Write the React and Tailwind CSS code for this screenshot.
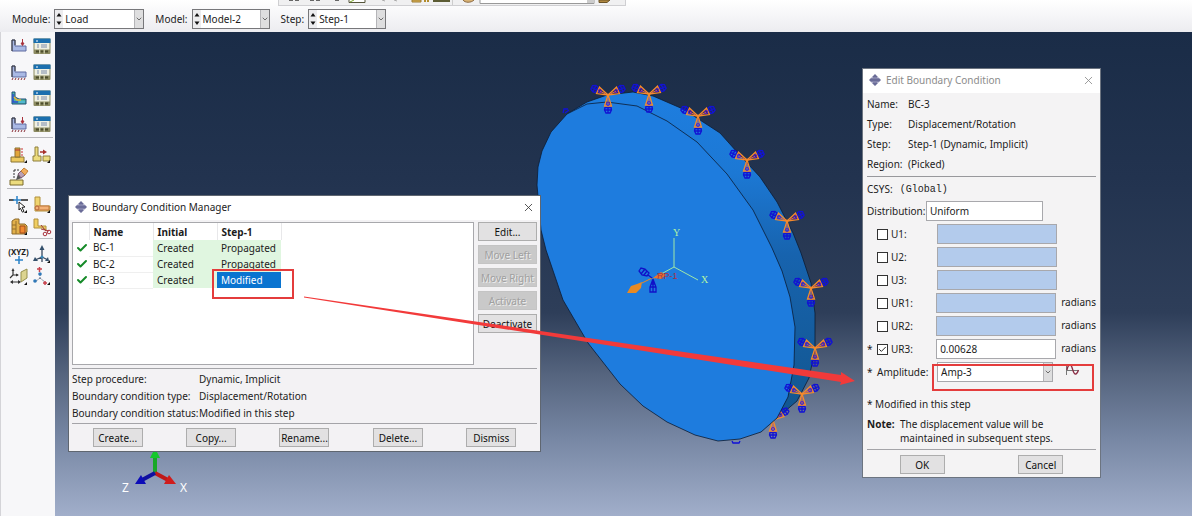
import React, { useState } from "react";
import { X, ChevronDown, Check } from "lucide-react";

/* ---------- toolbox icons ---------- */

const BracketIcon = ({ kind }) => (
  <svg width="18" height="18" viewBox="0 0 18 18" fill="none">
    {kind === "field" ? (
      <>
        <path d="M2 3h3v5l4 2h7v5H2z" fill="#4fb6a4" stroke="#1f4f78" />
        <path d="M3 5v8h5" stroke="#2c4fd0" strokeWidth="1.5" />
        <path d="M4 8l3 3h4" stroke="#e6b23a" strokeWidth="1.5" />
        <path d="M9 13h6" stroke="#52b8e0" strokeWidth="1.5" />
      </>
    ) : (
      <path d="M2 3h3v6h11v5H2z" fill="#a9b9e4" stroke="#5f6ba0" />
    )}
    {kind !== "field" && <path d="M2 3v11M2 3h3v5" stroke="#3a3a3a" />}
    {(kind === "load" || kind === "case") && (
      <path d="M12.5 2v6M11 6l1.5 2.500L14 6z" stroke="#a8323c" fill="#a8323c" />
    )}
    {(kind === "bc" || kind === "case") && (
      <path d="M3 15l-1 2M6 15l-1 2M9 15l-1 2M12 15l-1 2M15 15l-1 2" stroke="#8a3038" />
    )}
  </svg>
);

const ManagerIcon = () => (
  <svg width="18" height="18" viewBox="0 0 18 18">
    <rect x=".5" y="1.5" width="17" height="15.500" rx="1" fill="#8b8a60" />
    <rect x=".5" y="1.5" width="17" height="4.500" fill="#1b6fae" />
    <path d="M3 4h2" stroke="#fff" />
    <rect x="1.5" y="6" width="15" height="6.500" fill="#eff0e2" />
    <path d="M4 8h2M4 10h2M8 8h6M8 10h6" stroke="#7c8cab" />
    <path d="M3 14.500h3M7.500 14.500h3M12 14.500h3" stroke="#4c4d2c" strokeWidth="2" />
    <path d="M6.700 12.500v4M11.200 12.500v4" stroke="#d8d8b8" />
  </svg>
);

const Corner = () => <path d="M18 15v3h-3z" fill="#111" />;

const ToolIcon = ({ name }) => (
  <svg width="20" height="20" viewBox="0 0 20 20" fill="none">
    {name === "partition-cell" && (
      <>
        <path d="M2 12h13v5H2z" fill="#ecc95e" stroke="#8a7434" />
        <path d="M6 3h5v9H6z" fill="#e2a53a" stroke="#8a7030" />
        <path d="M6 5h5" stroke="#a8323c" />
        <path d="M13 3v9" stroke="#c33" strokeDasharray="2 1" />
        <Corner />
      </>
    )}
    {name === "translate" && (
      <>
        <path d="M3 2h3v9h3v5H1v-5h2z" fill="#ecdc7e" stroke="#8e7e3c" />
        <path d="M11 11h7v5h-7z" fill="#ecdc7e" stroke="#8e7e3c" />
        <path d="M8 7h4" stroke="#a8322c" strokeWidth="1.5" />
        <path d="M11 4.500L15 7l-4 2.500z" fill="#a8322c" />
        <Corner />
      </>
    )}
    {name === "edit" && (
      <>
        <path d="M1 13h13v5H1z" fill="#ecdc7e" stroke="#7a6a2c" />
        <path d="M5 3v9M5 3h5" stroke="#333" strokeDasharray="2 1" />
        <path d="M7 13l2-6 4 4z" fill="#555" />
        <path d="M9 7l3-3 4 4-4 3z" fill="#b9a0b4" stroke="#7a5a70" />
        <path d="M12 4l3-3 4 3-3 4z" fill="#f0ad5c" stroke="#c08038" />
      </>
    )}
    {name === "pick" && (
      <>
        <path d="M0 5h5M12 5h7" stroke="#222" strokeWidth="1.5" />
        <path d="M8 1v8M4 5h8" stroke="#2a82c8" strokeWidth="1.5" />
        <path d="M10 7l6 5-3 .4 2 4-1.600.8-2-4L10 15z" fill="#fff" stroke="#222" />
        <Corner />
      </>
    )}
    {name === "face" && (
      <>
        <path d="M3 2h5v9h10v5H3z" fill="#f0d470" stroke="#b0903c" />
        <path d="M4 11h13v4H4z" fill="#f3b277" stroke="#c0753a" />
        <circle cx="5" cy="13" r="2" fill="#f3b277" stroke="#b5653a" />
        <Corner />
      </>
    )}
    {name === "solid" && (
      <>
        <path d="M3 4l3-2h4v5h6l2 2v6l-3 2H3z" fill="#e2b04a" stroke="#8c6a2c" />
        <path d="M7 4v13M3 8h4M3 12h4" stroke="#94702c" />
        <path d="M11 9h5v7h-5z" fill="#f08830" stroke="#a04a1c" />
        <Corner />
      </>
    )}
    {name === "cut" && (
      <>
        <path d="M2 2h4v7h8v5l-3-3H2z" fill="#f0cf62" stroke="#b0903c" />
        <path d="M9 8l5 6M9 12l8 2" stroke="#a03c3c" />
        <circle cx="13" cy="17" r="1.800" stroke="#a8323c" />
        <circle cx="17" cy="15" r="1.800" stroke="#a8323c" />
      </>
    )}
    {name === "triad" && (
      <>
        <path d="M10 3v9L3 15M10 12l6 3M10 12v5" stroke="#39495f" strokeWidth="1.300" />
        <path d="M10 0l2.500 5h-5zM1 16l2-4 3 4zM17 16l-1-4-3 4z" fill="#34506c" />
        <circle cx="10" cy="12" r="1.500" fill="#3886b8" />
        <Corner />
      </>
    )}
    {name === "plane" && (
      <>
        <path d="M12 5l6-3v9l-6 4z" fill="#dcd490" stroke="#96904c" />
        <path d="M4 3v5l-3 3M4 8h5M2 15h9" stroke="#333" strokeWidth="1.200" />
        <path d="M4 1l1.500 3h-3zM10 8L7 6.500v3zM1 15l3-2v4zM12 15l-3-2v4z" fill="#333" />
        <Corner />
      </>
    )}
    {name === "points" && (
      <>
        <path d="M5 2h5M7.500 0v5" stroke="#c8414c" strokeWidth="1.500" />
        <path d="M8 7v4M8 11l-5 4M8 11l6 5" stroke="#6a7a90" strokeDasharray="2 1" />
        <circle cx="8" cy="7" r="1.800" fill="#2f78b8" />
        <circle cx="3" cy="14" r="1.800" fill="#2f78b8" />
        <path d="M11 16h4M13 14v4" stroke="#c8414c" strokeWidth="1.500" />
        <Corner />
      </>
    )}
  </svg>
);

const AppLogo = () => (
  <svg width="12" height="12" viewBox="0 0 12 12" className="shrink-0">
    <path d="M6 0l3.500 3.500h-7zM6 12l3.500-3.500h-7zM0 6l2-2h8l2 2-2 2H2z" fill="#6a6c98" />
    <path d="M4 2h4v8H4z" fill="#6a6c98" />
    <path d="M2 4h8M2 8h8" stroke="#a9aac8" strokeWidth=".8" />
  </svg>
);

/* ---------- top bar ---------- */

const ToolbarRemnant = () => (
  <div className="ml-[278px] flex h-[6px] w-[348px] items-start overflow-hidden border-r border-b border-l border-[#cfcfd2] bg-[#f0f0f1]">
    <svg width="346" height="5" viewBox="0 0 346 5" fill="none">
      <path d="M10 .5h4M16 .5h4M31 .5h4M37 .5h4M56 .5h4" stroke="#666" />
      <path d="M70 0v2.500h16V0" stroke="#55553a" fill="#fff" />
      <path d="M71 2l4-2" stroke="#7ca52c" />
      <path d="M103 0l3 1M115 0l3 1" stroke="#aaa" />
      <path d="M133 0h9v2h-9z" fill="#e2b654" stroke="#9a7a34" />
      <path d="M146 0v2M149 0v2" stroke="#b28c2c" strokeWidth="2" />
      <path d="M154 0h17v2h-17z" fill="#5c5c34" />
      <path d="M173.500 0v5" stroke="#ccc" />
      <path d="M184 0c2 3 8 3 11 0" fill="#d8b274" stroke="#8a6840" />
      <path d="M201 0v3.500h114V0" fill="#fff" stroke="#999" />
      <path d="M308 0h7v3h-7z" fill="#ccc" />
      <path d="M320 0h11l-3 2.500h-8z" fill="#b08840" stroke="#6c5428" />
    </svg>
  </div>
);

const ContextSelect = ({ id, label, value, width }) => (
  <div className="flex items-center gap-1">
    <label htmlFor={id}>{label}:</label>
    <div className={`flex h-5 items-stretch border border-[#77777a] bg-white ${width}`}>
      <div className="flex w-2 shrink-0 flex-col justify-evenly bg-[#ececee]">
        <svg width="8" height="6" viewBox="0 0 8 6"><path d="M4 1l2.500 3.500h-5z" fill="#111" /></svg>
        <svg width="8" height="6" viewBox="0 0 8 6"><path d="M4 5l2.500-3.500h-5z" fill="#111" /></svg>
      </div>
      <select id={id} defaultValue={value} className="min-w-0 flex-1 appearance-none bg-transparent pl-0.5 outline-none">
        <option>{value}</option>
      </select>
      <span className="pointer-events-none flex w-[9px] shrink-0 items-center border-l border-[#b5b5b8] bg-[#dededf]">
        <ChevronDown size={8} strokeWidth={2.5} color="#555" />
      </span>
    </div>
  </div>
);

/* ---------- side toolbox ---------- */

const ToolRow = ({ children, tall }) => (
  <div className={`grid grid-cols-2 place-items-center ${tall ? "h-[26px]" : "h-[22px]"}`}>{children}</div>
);

const Tool = ({ label, children }) => (
  <button aria-label={label} className="flex items-center justify-center">{children}</button>
);

const Toolbox = () => (
  <aside className="w-[55px] shrink-0 border-l border-[#d4d4d8] bg-[#f7f7f9] pr-0.5 pl-1.5">
    <div className="border-b border-[#b9b9bd] pt-px">
      {["load", "bc", "field", "case"].map((k) => (
        <ToolRow key={k} tall>
          <Tool label={`create ${k}`}><BracketIcon kind={k} /></Tool>
          <Tool label={`${k} manager`}><ManagerIcon /></Tool>
        </ToolRow>
      ))}
    </div>
    <div className="border-b border-[#b9b9bd] pt-[6px]">
      <ToolRow>
        <Tool label="partition cell"><ToolIcon name="partition-cell" /></Tool>
        <Tool label="translate"><ToolIcon name="translate" /></Tool>
      </ToolRow>
      <ToolRow>
        <Tool label="edit"><ToolIcon name="edit" /></Tool>
      </ToolRow>
    </div>
    <div className="border-b border-[#b9b9bd] pt-[5px]">
      <ToolRow>
        <Tool label="pick edge"><ToolIcon name="pick" /></Tool>
        <Tool label="partition face"><ToolIcon name="face" /></Tool>
      </ToolRow>
      <ToolRow>
        <Tool label="partition solid"><ToolIcon name="solid" /></Tool>
        <Tool label="cut"><ToolIcon name="cut" /></Tool>
      </ToolRow>
    </div>
    <div className="pt-[5px]">
      <ToolRow>
        <Tool label="datum point">
          <span className="flex flex-col items-center text-[8px] leading-[9px] font-bold">
            (XYZ)
            <svg width="8" height="8" viewBox="0 0 8 8"><path d="M4 0v8M0 4h8" stroke="#2a82c8" strokeWidth="1.5" /></svg>
          </span>
        </Tool>
        <Tool label="datum csys"><ToolIcon name="triad" /></Tool>
      </ToolRow>
      <ToolRow>
        <Tool label="datum plane"><ToolIcon name="plane" /></Tool>
        <Tool label="csys by points"><ToolIcon name="points" /></Tool>
      </ToolRow>
    </div>
  </aside>
);

/* ---------- 3D viewport ---------- */

const Arm = ({ angle }) => (
  <g transform={`rotate(${angle})`} fill="none">
    <path d="M0 12v6M-3 12.500h6l.5 2.500-1.500 3h-4l-1.500-3zM-3 15h6" stroke="#1212d4" strokeWidth="1.300" />
    <path d="M0 0L-3.500 11h7z" stroke="#f58a2c" strokeWidth="1.300" />
    <path d="M0 3v6" stroke="#e06a4c" />
    <circle cx="0" cy="9" r="1.500" stroke="#5a1cc8" />
  </g>
);

const BcMarker = ({ x, y }) => (
  <g transform={`translate(${x} ${y})`}>
    <Arm angle={0} />
    <Arm angle={115} />
    <Arm angle={245} />
  </g>
);

const markers = [
  [608, 95], [649, 94], [698, 116], [747, 160], [787, 221], [811, 288], [815, 348], [802, 394],
];

const front =
  "537,185 538,167 542,151 551,132 567,114 587,104 607,102 637,106 667,121 697,142 727,174 753,210 772,248 782,271 790,297 795,327 794,365 788,397 777,418 761,432 740,439 718,441 695,435 667,422 643,406 620,384 588,343 563,300 546,250 541,230";
const rim =
  "567,114 587,102 607,95 633,92 653,96 683,109 720,133 737,152 760,177 777,202 793,233 801,253 811,283 815,313 815,350 809,378 797,401 777,418 740,400 600,140";

const Scene = () => (
  <svg width="1137" height="484" viewBox="55 32 1137 484" className="absolute top-0 left-0">
    <defs>
      <linearGradient id="rim" x1="0" y1="0" x2="0" y2="1">
        <stop offset="0" stopColor="#1e7ee0" />
        <stop offset=".25" stopColor="#1c78d4" />
        <stop offset=".5" stopColor="#1763ae" />
        <stop offset="1" stopColor="#12568f" />
      </linearGradient>
    </defs>
    <g fill="none" stroke="#1010d8" strokeWidth="1.300">
      <path d="M563 113l1-4 4 0M565 113l4-3M732 441l1 2h6l1-2" />
    </g>
    <polygon points={rim} fill="url(#rim)" stroke="#0b1c33" strokeWidth=".8" />
    <g transform="translate(773 420)">
      <Arm angle={0} />
      <Arm angle={235} />
    </g>
    <polygon points={front} fill="#1e7cde" stroke="#0b1c33" strokeWidth=".8" />
    {markers.map(([x, y]) => (
      <BcMarker key={`${x}-${y}`} x={x} y={y} />
    ))}

    {/* view triad at the part origin */}
    <path d="M674 238v29l24 13M674 267l-22 12" fill="none" stroke="#9fe8a8" />
    <g fill="#b4f5a4" fontFamily="Liberation Serif, serif" fontSize="10">
      <text x="673" y="236">Y</text>
      <text x="701" y="283">X</text>
    </g>

    {/* reference point */}
    <path d="M653 278l8-6 5 3-5 4z" fill="#e8762c" />
    <path d="M627 293l4-7 6-2 5-2-1 6-5 5z" fill="#e88a24" />
    <path d="M642 283l10-5" stroke="#e88a24" />
    <g fill="none" stroke="#1010c8" strokeWidth="1.300">
      <path d="M639 271l2-3 4 1 4 4-2 3-5-1zM641 274l4-5M644 275l3-4M648 275l4 3" />
      <path d="M653 279l-3 8v5h6v-5zM650 287h6M653 280v12M651 284h4" />
    </g>
    <text x="657" y="279" fontSize="9" fill="#a83048" fontFamily="Liberation Sans, sans-serif">RP-1</text>

    {/* global triad */}
    <g strokeWidth="4">
      <path d="M155 473v-18" stroke="#18a828" />
      <path d="M155 473l13 7" stroke="#c01818" />
      <path d="M155 473l-13 7" stroke="#1010a0" />
    </g>
    <path d="M150 458l5-10 5 10z" fill="#14c82c" />
    <path d="M169 475l7 9-12 0z" fill="#d01c1c" />
    <path d="M141 475l-6 9 11 0z" fill="#0c0cb8" />
    <g fill="#fff" fontSize="12" fontFamily="Noto Sans, sans-serif">
      <text x="122" y="492">Z</text>
      <text x="180" y="492">X</text>
    </g>
  </svg>
);

const Annotations = () => (
  <svg width="1137" height="484" viewBox="55 32 1137 484" className="pointer-events-none absolute top-0 left-0">
    <rect x="213" y="270" width="80" height="28" fill="none" stroke="#e43c3c" strokeWidth="2" />
    <rect x="933" y="365" width="160" height="25" fill="none" stroke="#e43c3c" strokeWidth="2" />
    <path d="M304 296.500L841 375l0-3 14 9-15 4 1-3L304 297.500z" fill="#f23a3a" />
  </svg>
);

/* ---------- dialogs ---------- */

const TitleBar = ({ title, dim }) => (
  <div className="flex h-6 items-center gap-[5px] bg-white pr-[5px] pb-0.5 pl-1.5">
    <AppLogo />
    <h2 className={`flex-1 ${dim ? "text-[#8c8c8c]" : "text-[#222]"}`}>{title}</h2>
    <button aria-label="Close">
      <X size={13} strokeWidth={1.5} color={dim ? "#888" : "#333"} />
    </button>
  </div>
);

const PushButton = ({ children, disabled, className = "" }) => (
  <button
    disabled={disabled}
    className={`h-[19px] border leading-none whitespace-nowrap ${
      disabled
        ? "border-[#c4c4c4] bg-[#c9c9c9] text-[#a0a0a0] [text-shadow:1px_1px_0_#eee]"
        : "border-[#adadad] bg-[#e2e1e2] text-[#111]"
    } ${className}`}
  >
    {children}
  </button>
);

const conditions = [
  { name: "BC-1", initial: "Created", step: "Propagated" },
  { name: "BC-2", initial: "Created", step: "Propagated" },
  { name: "BC-3", initial: "Created", step: "Modified" },
];

const ManagerDialog = () => {
  const [selected, setSelected] = useState("BC-3");

  return (
    <section className="absolute top-[163px] left-[13px] w-[473px] border border-[#5f6670] bg-[#f3f2f4]">
      <TitleBar title="Boundary Condition Manager" />
      <div className="px-[3px] pt-0.5">
        <div className="flex gap-1 pb-[3px]">
          <div className="h-[143px] flex-1 border border-[#a8a8ac] bg-white">
            <table className="w-[208px] table-fixed border-collapse text-left">
              <colgroup>
                <col className="w-4" />
                <col className="w-16" />
                <col className="w-16" />
                <col className="w-16" />
              </colgroup>
              <thead>
                <tr className="h-[17px] leading-4 font-bold">
                  <td className="border-r border-[#e8e8ea]" />
                  <th className="border-r border-[#e8e8ea] p-0 pl-1">Name</th>
                  <th className="border-r border-[#e8e8ea] p-0 pl-1">Initial</th>
                  <th className="border-r border-[#e8e8ea] p-0 pl-1">Step-1</th>
                </tr>
              </thead>
              <tbody>
                {conditions.map((c) => (
                  <tr key={c.name} className="h-4 leading-[15px]" onClick={() => setSelected(c.name)}>
                    <td className="p-0 pl-[3px]">
                      <Check size={12} strokeWidth={4} color="#158a28" />
                    </td>
                    <td className="border-b border-[#efefef] p-0 pl-1">{c.name}</td>
                    <td className="bg-[#e0f6e0] p-0 pl-1">{c.initial}</td>
                    <td className={`p-0 pl-1 ${selected === c.name ? "bg-[#0a74d0] text-white" : "bg-[#e0f6e0]"}`}>
                      {c.step}
                    </td>
                  </tr>
                ))}
              </tbody>
            </table>
          </div>
          <div className="flex w-[59px] flex-col gap-1">
            <PushButton>Edit...</PushButton>
            <PushButton disabled>Move Left</PushButton>
            <PushButton disabled>Move Right</PushButton>
            <PushButton disabled>Activate</PushButton>
            <PushButton>Deactivate</PushButton>
          </div>
        </div>
        <dl className="grid grid-cols-[127px_1fr] border-y border-[#a4a4a8] pt-0.5 pb-px leading-[17px]">
          <dt>Step procedure:</dt>
          <dd>Dynamic, Implicit</dd>
          <dt>Boundary condition type:</dt>
          <dd>Displacement/Rotation</dd>
          <dt>Boundary condition status:</dt>
          <dd>Modified in this step</dd>
        </dl>
      </div>
      <div className="grid grid-cols-5 justify-items-center px-0.5 pt-1 pb-1">
        {["Create...", "Copy...", "Rename...", "Delete...", "Dismiss"].map((b) => (
          <PushButton key={b} className="w-[50px]">{b}</PushButton>
        ))}
      </div>
    </section>
  );
};

const dofs = [
  { name: "U1" },
  { name: "U2" },
  { name: "U3" },
  { name: "UR1", unit: "radians" },
  { name: "UR2", unit: "radians" },
  { name: "UR3", unit: "radians", value: "0.00628" },
];

const EditDialog = () => (
  <section className="absolute top-[36px] left-[807px] w-[239px] border border-[#6c7480] bg-[#f4f3f4]">
    <TitleBar title="Edit Boundary Condition" dim />
    <div className="px-1">
      <dl className="grid grid-cols-[41px_1fr] border-b border-[#98989c] pt-px pb-0.5 leading-[20px]">
        <dt>Name:</dt>
        <dd>BC-3</dd>
        <dt>Type:</dt>
        <dd>Displacement/Rotation</dd>
        <dt>Step:</dt>
        <dd>Step-1 (Dynamic, Implicit)</dd>
        <dt>Region:</dt>
        <dd>(Picked)</dd>
      </dl>
      <p className="flex h-6 items-center gap-[7px]">
        CSYS: <span className="font-['Liberation_Mono',monospace]">(Global)</span>
      </p>
      <div className="mb-[3px] flex items-center">
        <label htmlFor="distribution" className="w-[59px]">Distribution:</label>
        <input
          id="distribution"
          defaultValue="Uniform"
          className="h-5 w-[117px] border border-[#a8a8ac] bg-white px-[3px] outline-none"
        />
      </div>
      <div className="flex flex-col gap-[3px]">
        {dofs.map((d) => (
          <div key={d.name} className="flex h-5 items-center">
            <span className="w-[10px]">{d.value ? "*" : ""}</span>
            <label className="flex w-[60px] items-center gap-[3px]">
              <input
                type="checkbox"
                defaultChecked={!!d.value}
                className="peer h-[11px] w-[11px] appearance-none border border-[#333] bg-white"
              />
              <Check size={9} strokeWidth={2.5} className="-ml-[13px] hidden peer-checked:block" />
              <span className="peer-checked:ml-px">{d.name}:</span>
            </label>
            <input
              aria-label={`${d.name} value`}
              defaultValue={d.value}
              disabled={!d.value}
              className="h-5 w-[120px] border border-[#a8a8ac] bg-white px-[3px] outline-none disabled:bg-[#b3cbec]"
            />
            {d.unit && <span className="pb-0.5 pl-[5px]">{d.unit}</span>}
          </div>
        ))}
      </div>
      <div className="mt-[3px] flex h-5 items-center">
        <span className="w-[10px]">*</span>
        <label htmlFor="amplitude" className="w-[60px]">Amplitude:</label>
        <div className="flex h-5 w-[116px] items-stretch border border-[#a8a8ac] bg-white">
          <select id="amplitude" defaultValue="Amp-3" className="min-w-0 flex-1 appearance-none bg-transparent pl-[3px] outline-none">
            <option>Amp-3</option>
          </select>
          <span className="pointer-events-none flex w-[9px] items-center border-l border-[#b5b5b8] bg-[#dededf]">
            <ChevronDown size={8} strokeWidth={2.5} color="#555" />
          </span>
        </div>
        <button aria-label="Create amplitude" className="pb-1 pl-3">
          <svg width="15" height="14" viewBox="0 0 15 14" fill="none">
            <path d="M1.500 1v11M1.500 7.500h12" stroke="#777" />
            <path d="M2 7C3 1 6 0 7.500 6s4 7 6 1" stroke="#8a2c44" strokeWidth="1.300" />
          </svg>
        </button>
      </div>
      <p className="mt-3 h-5 leading-5">* Modified in this step</p>
      <div className="grid grid-cols-[33px_1fr] border-b border-[#a4a4a8] pt-[3px] pb-1 leading-[14px]">
        <b>Note:</b>
        <p>
          The displacement value will be
          <br />
          maintained in subsequent steps.
        </p>
      </div>
    </div>
    <div className="grid grid-cols-2 justify-items-center pt-[5px] pb-[3px]">
      <PushButton className="w-[45px]">OK</PushButton>
      <PushButton className="w-[45px]">Cancel</PushButton>
    </div>
  </section>
);

export default function App() {
  return (
    <div className="flex min-h-screen flex-col overflow-hidden bg-[#f7f7f9] font-['Noto_Sans','Noto_Sans_CJK_SC',sans-serif] text-[10px] text-[#1c1c1c]">
      <header className="h-8 bg-linear-to-b from-white to-[#ececf0]">
        <ToolbarRemnant />
        <div className="flex h-[26px] items-center gap-[11px] pl-3">
          <ContextSelect id="module" label="Module" value="Load" width="w-[90px]" />
          <ContextSelect id="model" label="Model" value="Model-2" width="w-[78px]" />
          <ContextSelect id="step" label="Step" value="Step-1" width="w-[78px]" />
        </div>
      </header>
      <div className="flex flex-1">
        <Toolbox />
        <main className="relative min-h-[484px] flex-1 overflow-hidden bg-[linear-gradient(to_bottom,#1a2c47_0%,#22334f_30%,#2e3e59_58%,#56657f_71%,#7787a4_84%,#a1aeca_100%)]">
          <Scene />
          <ManagerDialog />
          <EditDialog />
          <Annotations />
        </main>
      </div>
    </div>
  );
}
